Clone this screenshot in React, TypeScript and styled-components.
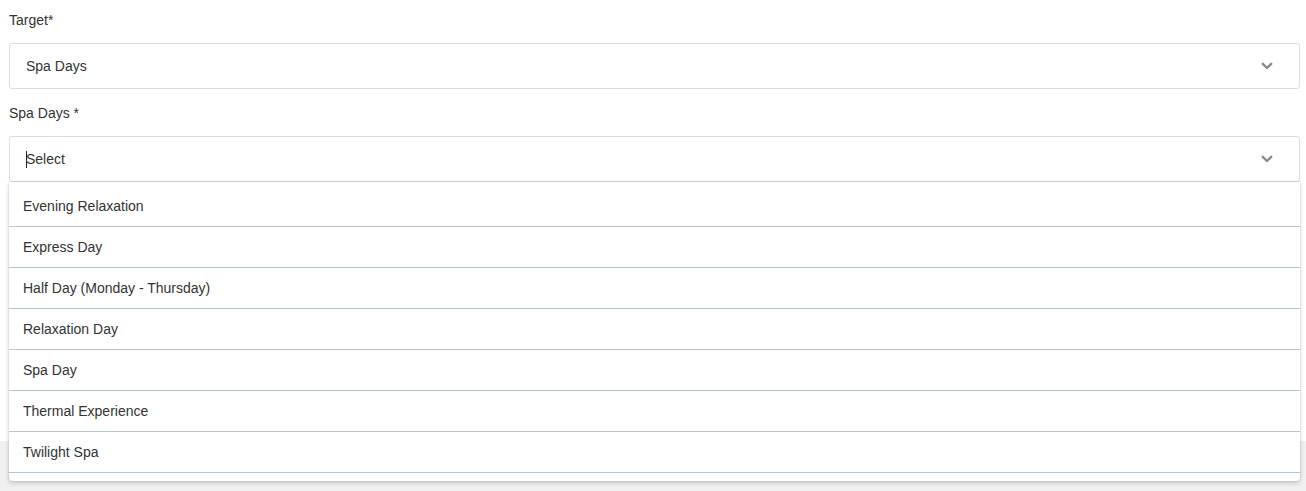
import React from "react";
import styled, { createGlobalStyle } from "styled-components";

const GlobalStyle = createGlobalStyle`
  html, body {
    margin: 0;
    padding: 0;
    background: #ffffff;
    font-family: "Liberation Sans", Arial, sans-serif;
    color: #333;
  }
`;

const options = [
  "Evening Relaxation",
  "Express Day",
  "Half Day (Monday - Thursday)",
  "Relaxation Day",
  "Spa Day",
  "Thermal Experience",
  "Twilight Spa",
];

function Chevron() {
  return (
    <svg width="12" height="8" viewBox="0 0 12 8" fill="none">
      <path d="M1.8 1.8l4.2 4.2 4.2-4.2" stroke="#8a8a8a" strokeWidth="2.4" strokeLinecap="round" strokeLinejoin="round" />
    </svg>
  );
}

function SelectField({
  label,
  value,
  focused,
  children,
}: {
  label: string;
  value: string;
  focused?: boolean;
  children?: React.ReactNode;
}) {
  return (
    <Field>
      <Label>{label}</Label>
      <Control>
        <SelectBox>
          <Value>
            {focused && <Caret />}
            {value}
          </Value>
          <Chevron />
        </SelectBox>
        {children}
      </Control>
    </Field>
  );
}

export default function App() {
  return (
    <>
      <GlobalStyle />
      <Page>
        <Form>
          <SelectField label="Target*" value="Spa Days" />
          <SelectField label="Spa Days *" value="Select" focused>
            <Menu>
              {options.map((option) => (
                <MenuItem key={option}>{option}</MenuItem>
              ))}
            </Menu>
          </SelectField>
        </Form>
        <Footer />
      </Page>
    </>
  );
}

const Page = styled.div`
  width: 1306px;
  height: 491px;
  display: flex;
  flex-direction: column;
  overflow: hidden;
`;

const Form = styled.div`
  height: 441px;
  box-sizing: border-box;
  padding: 11px 6px 0 9px;
  background: #fff;
  position: relative;
  z-index: 2;
`;

const Footer = styled.div`
  flex: 1;
  background: #f0f0f0;
`;

const Field = styled.div`
  margin-bottom: 15px;
`;

const Label = styled.div`
  font-size: 14px;
  line-height: 18px;
  color: #333;
  margin-bottom: 14px;
`;

const Control = styled.div`
  position: relative;
`;

const SelectBox = styled.div`
  height: 46px;
  box-sizing: border-box;
  border: 1px solid #dcdcdc;
  border-radius: 3px;
  display: flex;
  align-items: center;
  justify-content: space-between;
  padding: 0 26px 0 16px;
  background: #fff;
`;

const Value = styled.div`
  font-size: 14px;
  color: #333;
  display: flex;
  align-items: center;
`;

const Caret = styled.span`
  display: inline-block;
  width: 1px;
  height: 17px;
  background: #222;
  margin-right: -1px;
`;

const Menu = styled.div`
  position: absolute;
  top: 46px;
  left: 0;
  right: 0;
  background: #fff;
  border-radius: 0 0 4px 4px;
  box-shadow: 0 2px 5px rgba(0, 0, 0, 0.18), 0 0 0 1px rgba(0, 0, 0, 0.04);
  padding: 4px 0 8px;
`;

const MenuItem = styled.div`
  height: 40px;
  border-bottom: 1px solid #b9c5cf;
  display: flex;
  align-items: center;
  padding-left: 14px;
  font-size: 14px;
  color: #333;
`;
